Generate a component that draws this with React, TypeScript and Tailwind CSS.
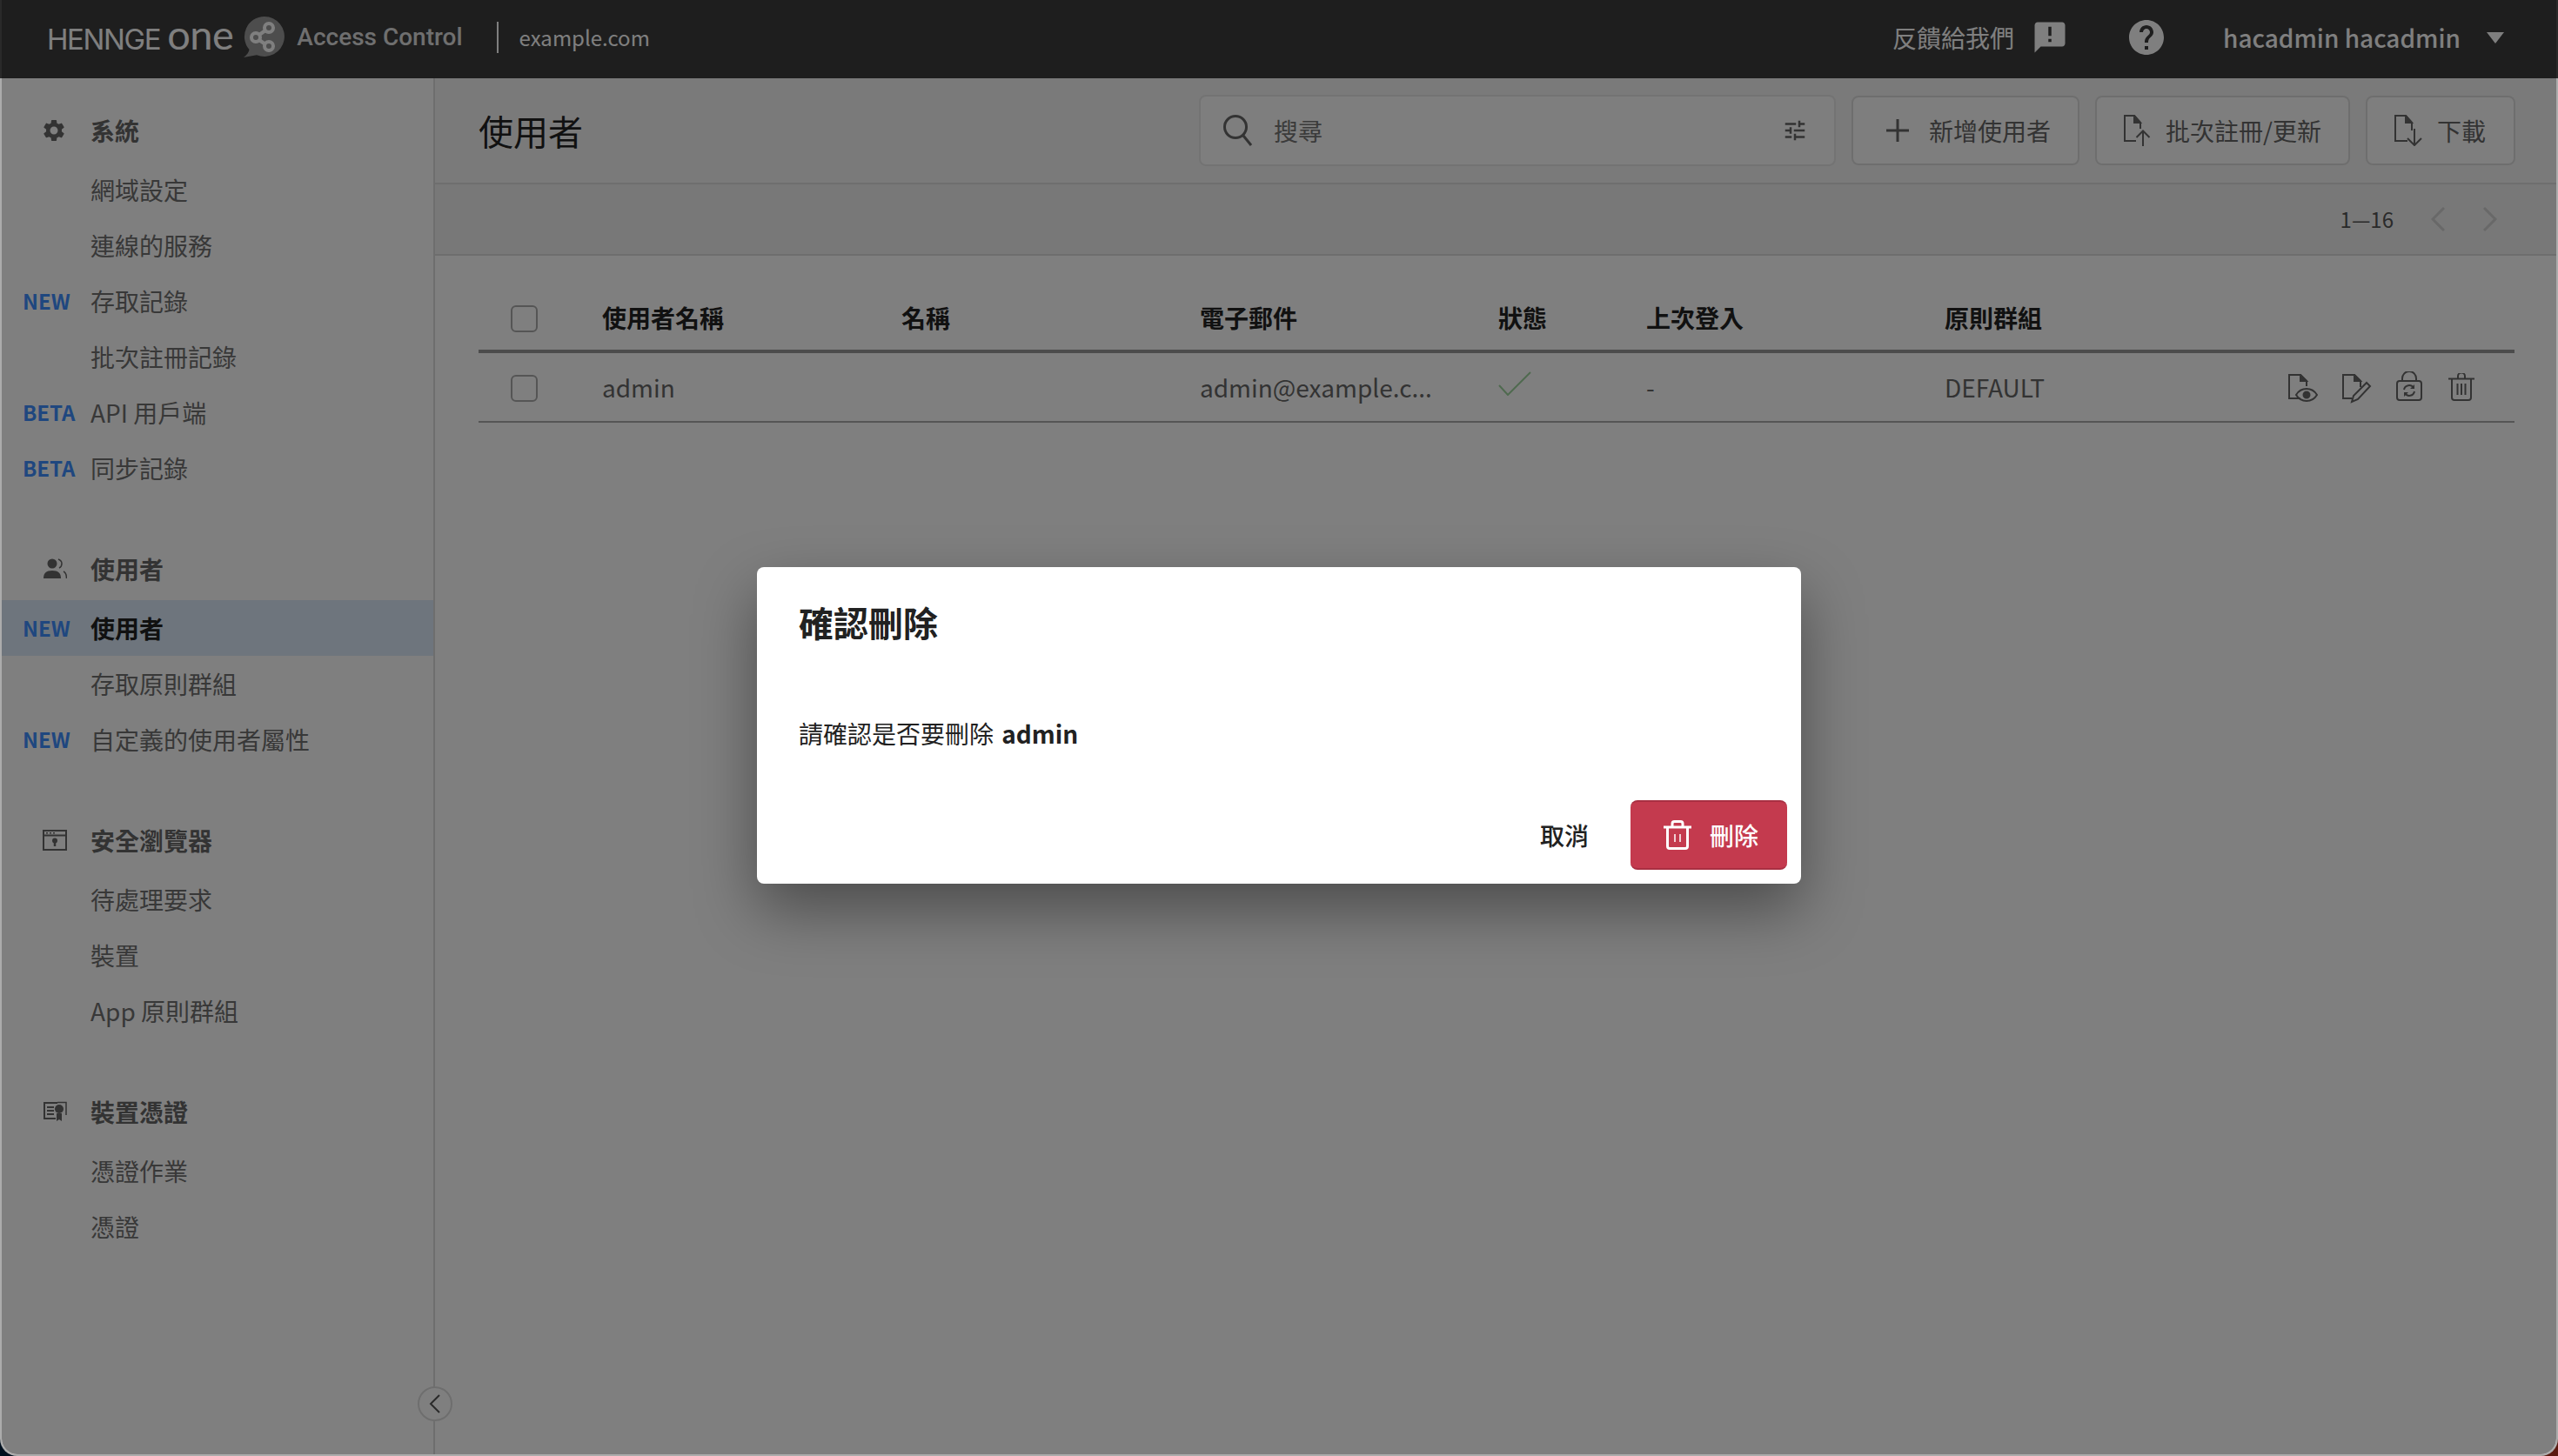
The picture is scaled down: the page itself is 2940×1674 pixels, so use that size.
import { MdSettings, MdHelp, MdAnnouncement, MdTune } from "react-icons/md";

const font = "font-['Noto_Sans_CJK_TC','Noto_Sans',sans-serif]";

type NavItem = { label: string; tag?: string; active?: boolean };
type NavGroup = { title: string; icon: React.ReactNode; items: NavItem[] };

function UsersIcon() {
  return (
    <svg width="28" height="24" viewBox="0 0 28 24" fill="currentColor">
      <circle cx="11" cy="6" r="5.500" />
      <path d="M1 23c0-6 3-9 10-9s10 3 10 9z" />
      <path d="M18 1c3 1 4 3 4 5s-1 4-3 5" fill="none" stroke="currentColor" strokeWidth="1.500" />
      <path d="M24 15c2 1 3.500 4 3.500 8" fill="none" stroke="currentColor" strokeWidth="1.500" />
    </svg>
  );
}

function BrowserIcon() {
  return (
    <svg width="28" height="24" viewBox="0 0 28 24" fill="none" stroke="currentColor">
      <rect x="1" y="1" width="26" height="22" strokeWidth="2" />
      <path d="M1 6.500h26" strokeWidth="2" />
      <path d="M4 3.700h2M8 3.700h2M12 3.700h2" strokeWidth="1.500" />
      <circle cx="14" cy="12.500" r="3" fill="currentColor" stroke="none" />
      <path d="M14 13v6" strokeWidth="2.500" />
    </svg>
  );
}

function CertIcon() {
  return (
    <svg width="28" height="24" viewBox="0 0 28 24" fill="currentColor">
      <path d="M17 2H2v18h13" fill="none" stroke="currentColor" strokeWidth="2" />
      <path d="M17 1.500h10V16" fill="none" stroke="currentColor" strokeWidth="1.500" />
      <path d="M5 7h8M5 11h8M5 15h8" stroke="currentColor" strokeWidth="2" />
      <circle cx="19" cy="9" r="5" />
      <path d="M16 14h6v9l-3-2-3 2z" />
    </svg>
  );
}

function DocUpIcon() {
  return (
    <svg width="32" height="36" viewBox="0 0 32 36" fill="none" stroke="currentColor" strokeWidth="2">
      <path d="M14 30H1V1h11l7 8v7" />
      <path d="M12 1v8h7z" fill="currentColor" />
      <path d="M22 36V19M14.500 26l7.500-7.500 7.500 7.500" />
    </svg>
  );
}

function DocDownIcon() {
  return (
    <svg width="32" height="36" viewBox="0 0 32 36" fill="none" stroke="currentColor" strokeWidth="2">
      <path d="M15 30H1V1h12l7 8v9" />
      <path d="M13 1v8h7z" fill="currentColor" />
      <path d="M23 16v18M15 27l8 8 8-8" />
    </svg>
  );
}

function TrashIcon() {
  return (
    <svg className="-mt-px ml-0.5" width="30" height="32" viewBox="0 0 30 32" fill="none" stroke="currentColor" strokeWidth="2">
      <path d="M0 6.500h30" />
      <path d="M11 6V3.500a4 4 0 0 1 8 0V6" />
      <path d="M4 6.500V28a3 3 0 0 0 3 3h16a3 3 0 0 0 3-3V6.500" />
      <path d="M10.500 12v13M15 12v13M19.500 12v13" />
    </svg>
  );
}

function DeleteIcon() {
  return (
    <svg width="32" height="34" viewBox="0 0 32 34" fill="none" stroke="currentColor" strokeWidth="3">
      <path d="M0 8h32" />
      <path d="M10 7V4a2.500 2.500 0 0 1 2.500-2.500h7A2.500 2.500 0 0 1 22 4v3" />
      <path d="M4.500 8v22a2.500 2.500 0 0 0 2.500 2.500h18a2.500 2.500 0 0 0 2.500-2.500V8" />
      <path d="M13 16v9M19 16v9" strokeWidth="1.500" />
    </svg>
  );
}

const groups: NavGroup[] = [
  {
    title: "系統",
    icon: <MdSettings size={30} />,
    items: [
      { label: "網域設定" },
      { label: "連線的服務" },
      { label: "存取記錄", tag: "NEW" },
      { label: "批次註冊記錄" },
      { label: "API 用戶端", tag: "BETA" },
      { label: "同步記錄", tag: "BETA" },
    ],
  },
  {
    title: "使用者",
    icon: <UsersIcon />,
    items: [
      { label: "使用者", tag: "NEW", active: true },
      { label: "存取原則群組" },
      { label: "自定義的使用者屬性", tag: "NEW" },
    ],
  },
  {
    title: "安全瀏覽器",
    icon: <BrowserIcon />,
    items: [{ label: "待處理要求" }, { label: "裝置" }, { label: "App 原則群組" }],
  },
  {
    title: "裝置憑證",
    icon: <CertIcon />,
    items: [{ label: "憑證作業" }, { label: "憑證" }],
  },
];

function Sidebar() {
  return (
    <aside className="relative flex w-[498px] shrink-0 flex-col gap-12 border-r-2 border-[#dcdcdc] bg-white pt-6">
      {groups.map((g) => (
        <div key={g.title}>
          <div className="flex h-[72px] items-center">
            <span className="flex w-[102px] justify-end pr-[27px] text-[#666]">{g.icon}</span>
            <span className="text-[28px] font-bold text-[#666]">{g.title}</span>
          </div>
          {g.items.map((it) => (
            <div key={it.label} className={`flex h-16 items-center ${it.active ? "bg-[#dcebfa]" : ""}`}>
              <span className="w-[102px] pl-[24px] text-[24px] font-semibold text-[#3e8eff]">{it.tag}</span>
              <span className={`text-[28px] ${it.active ? "font-bold text-[#222]" : "text-[#707070]"}`}>{it.label}</span>
            </div>
          ))}
        </div>
      ))}
      <button className="absolute bottom-[38px] right-[-22px] flex h-10 w-10 items-center justify-center rounded-full border-2 border-[#dcdcdc] bg-white text-[#555]">
        <svg width="14" height="22" viewBox="0 0 14 22" fill="none" stroke="currentColor" strokeWidth="2">
          <path d="M12 1L2 11l10 10" />
        </svg>
      </button>
    </aside>
  );
}

function TopBar() {
  return (
    <header className="flex h-[90px] shrink-0 items-center bg-[#3c3c3c] pb-1 pl-[52px] pr-[60px] text-white">
      <div className="flex items-baseline">
        <span className="font-['Inter',sans-serif] text-[33px] font-normal tracking-[-1.400px]">HENNGE</span>
        <span className="ml-2 font-['Lato',sans-serif] text-[47px] leading-none tracking-[-0.500px]">one</span>
      </div>
      <svg className="ml-3" width="48" height="48" viewBox="0 0 48 48">
        <path d="M24 0a23 23 0 1 1-9 44.200L0 47c4-3 6-6 6.500-9A23 23 0 0 1 24 0z" fill="#9a9a9a" />
        <g fill="none" stroke="#fff" strokeWidth="4">
          <circle cx="14" cy="24" r="5" />
          <circle cx="29" cy="13" r="5" />
          <circle cx="29" cy="34" r="5" />
          <path d="M18 21l7-5M18 27l7 5" />
        </g>
      </svg>
      <span className="ml-[13px] font-['Roboto',sans-serif] text-[28px] font-medium text-[#dedede]">Access Control</span>
      <span className="ml-[39px] h-9 w-0.5 bg-white" />
      <span className="ml-6 text-[24px]">example.com</span>
      <span className="ml-auto text-[28px]">反饋給我們</span>
      <MdAnnouncement className="ml-5" size={42} />
      <MdHelp className="ml-[66px]" size={48} />
      <span className="ml-16 text-[28px] font-medium">hacadmin hacadmin</span>
      <span className="ml-[30px] h-0 w-0 border-x-[10px] border-t-[13px] border-x-transparent border-t-white" />
    </header>
  );
}

function ToolButton({ icon, label, className }: { icon: React.ReactNode; label: string; className: string }) {
  return (
    <button className={`flex h-20 items-center rounded-lg border-2 border-[#dcdcdc] bg-[#fdfdfd] text-[28px] text-[#666] ${className}`}>
      {icon}
      {label}
    </button>
  );
}

function Toolbar() {
  return (
    <div className="flex h-[122px] shrink-0 items-center border-b-2 border-[#dcdcdc] bg-[#f5f5f5] pl-[50px] pr-[47px]">
      <h1 className="text-[40px] text-[#222]">使用者</h1>
      <div className="ml-auto mr-[18px] flex h-[82px] w-[732px] items-center rounded-lg border-2 border-[#e6e6e6] bg-[#fdfdfd] pl-[26px] pr-[30px] text-[#666]">
        <svg width="34" height="36" viewBox="0 0 34 36" fill="none" stroke="currentColor" strokeWidth="3">
          <circle cx="14" cy="14" r="12.500" />
          <path d="M23 24l9 11" />
        </svg>
        <span className="ml-6 text-[28px] text-[#777]">搜尋</span>
        <MdTune className="ml-auto" size={30} />
      </div>
      <div className="flex gap-[18px]">
        <ToolButton
          className="w-[262px] gap-[23px] pl-[38px]"
          label="新增使用者"
          icon={
            <svg width="26" height="26" viewBox="0 0 26 26" stroke="currentColor" strokeWidth="3">
              <path d="M13 0v26M0 13h26" />
            </svg>
          }
        />
        <ToolButton className="w-[293px] gap-4 pl-[31px]" label="批次註冊/更新" icon={<DocUpIcon />} />
        <ToolButton className="w-[172px] gap-[17px] pl-[31px]" label="下載" icon={<DocDownIcon />} />
      </div>
    </div>
  );
}

function Pager() {
  return (
    <div className="flex h-[82px] shrink-0 items-center justify-end gap-[43px] border-b-2 border-[#dcdcdc] bg-[#f0f0f0] pr-[68px]">
      <span className="text-[24px] text-[#555]">1—16</span>
      <div className="flex gap-11 text-[#d0d0d0]">
        <svg width="16" height="28" viewBox="0 0 16 28" fill="none" stroke="currentColor" strokeWidth="3">
          <path d="M15 1L2 14l13 13" />
        </svg>
        <svg width="16" height="28" viewBox="0 0 16 28" fill="none" stroke="currentColor" strokeWidth="3">
          <path d="M1 1l13 13L1 27" />
        </svg>
      </div>
    </div>
  );
}

function Checkbox({ className = "" }: { className?: string }) {
  return <span className={`block h-[31px] w-[31px] rounded-md border-2 border-[#aaa] bg-white ${className}`} />;
}

function RowIcons() {
  return (
    <div className="mt-1 flex items-start gap-7 text-[#666]">
      <svg width="34" height="34" viewBox="0 0 34 34" fill="none" stroke="currentColor" strokeWidth="2">
        <path d="M14 28H1V1h13l7 7v6" />
        <path d="M14 1v7h7z" fill="currentColor" />
        <path d="M9 24c3-5 7-7 12-7s9 2 12 7c-3 5-7 7-12 7s-9-2-12-7z" />
        <circle cx="21" cy="24" r="3.500" fill="currentColor" />
      </svg>
      <svg width="34" height="34" viewBox="0 0 34 34" fill="none" stroke="currentColor" strokeWidth="2">
        <path d="M11 28H1V1h13l7 7v7" />
        <path d="M14 1v7h7z" fill="currentColor" />
        <path d="M28 10l4 4-14 15-7 3 2-7z" />
      </svg>
      <svg className="-mt-[3px]" width="30" height="34" viewBox="0 0 30 34" fill="none" stroke="currentColor" strokeWidth="2">
        <path d="M7 11V8a8 8 0 0 1 16 0v3" />
        <rect x="1" y="11" width="28" height="22" rx="3" />
        <path d="M9 21a6 6 0 0 1 11-2M21 23a6 6 0 0 1-11 2" />
        <path d="M21 15v5h-5zM9 29v-5h5z" fill="currentColor" stroke="none" />
      </svg>
      <TrashIcon />
    </div>
  );
}

const tableCols = "grid-cols-[142px_344px_343px_343px_170px_343px_395px_1fr]";

function UserTable() {
  return (
    <div className="flex-1 bg-white pl-[50px] pr-[48px] pt-[37px]">
      <div className={`grid h-[75px] items-center border-b-4 border-[#999] pb-1 text-[28px] font-bold text-[#222] ${tableCols}`}>
        <span className="pl-[37px]"><Checkbox className="mt-1" /></span>
        <span>使用者名稱</span>
        <span>名稱</span>
        <span>電子郵件</span>
        <span>狀態</span>
        <span>上次登入</span>
        <span>原則群組</span>
        <span />
      </div>
      <div className={`grid h-20 items-center border-b-2 border-[#aaa] text-[28px] text-[#666] ${tableCols}`}>
        <span className="pl-[37px]"><Checkbox className="mt-[3px]" /></span>
        <span>admin</span>
        <span />
        <span>admin@example.c...</span>
        <svg className="mb-2" width="38" height="28" viewBox="0 0 38 28" fill="none" stroke="#9fd49f" strokeWidth="2">
          <path d="M1 16l10 11L37 1" />
        </svg>
        <span>-</span>
        <span>DEFAULT</span>
        <RowIcons />
      </div>
    </div>
  );
}

function ConfirmDialog() {
  return (
    <div className="absolute inset-0 flex justify-center bg-black/50 pt-[652px]">
      <div className="flex h-[364px] w-[1200px] flex-col rounded-lg bg-white text-[#212121] shadow-[0_30px_70px_rgba(0,0,0,0.4)]">
        <h2 className="pl-12 pt-[34px] text-[40px] leading-[58px] font-bold">確認刪除</h2>
        <p className="mt-[79px] pl-12 text-[28px] leading-10">
          請確認是否要刪除 <b className="ml-[3px]">admin</b>
        </p>
        <div className="mt-auto mb-4 flex items-center justify-end gap-12 pr-4">
          <button className="text-[28px] font-medium">取消</button>
          <button className="flex h-20 w-[180px] items-center justify-center gap-[21px] rounded-lg border-y-2 border-[#a92f42] bg-[#c43a4e] pl-[5px] text-[28px] font-medium text-white">
            <DeleteIcon />
            刪除
          </button>
        </div>
      </div>
    </div>
  );
}

export default function App() {
  return (
    <div className={`h-[1674px] w-[2940px] overflow-hidden bg-[linear-gradient(90deg,#00101f_50%,#5a1a10_50%)] ${font}`}>
      <div className="h-full overflow-hidden rounded-b-[20px] bg-[linear-gradient(#2a2a2a_90px,#acacac_90px)] px-0.5 pb-0.5">
        <div className="relative flex h-full flex-col overflow-hidden rounded-b-[18px] bg-white">
          <TopBar />
          <div className="flex min-h-0 flex-1">
            <Sidebar />
            <main className="flex min-w-0 flex-1 flex-col">
              <Toolbar />
              <Pager />
              <UserTable />
            </main>
          </div>
          <ConfirmDialog />
        </div>
      </div>
    </div>
  );
}
